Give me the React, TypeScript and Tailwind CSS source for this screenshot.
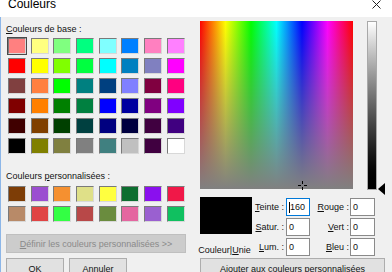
import React from "react";

const basic = [
  "#FF8080", "#FFFF80", "#80FF80", "#00FF80", "#80FFFF", "#0080FF", "#FF80C0", "#FF80FF",
  "#FF0000", "#FFFF00", "#80FF00", "#00FF40", "#00FFFF", "#0080C0", "#8080C0", "#FF00FF",
  "#804040", "#FF8040", "#00FF00", "#008080", "#004080", "#8080FF", "#800040", "#FF0080",
  "#800000", "#FF8000", "#008000", "#008040", "#0000FF", "#0000A0", "#800080", "#8000FF",
  "#400000", "#804000", "#004000", "#004040", "#000080", "#000040", "#400040", "#400080",
  "#000000", "#808000", "#808040", "#808080", "#408080", "#C0C0C0", "#400040", "#FFFFFF",
];

const custom = [
  "#7d3d06", "#9b4ed0", "#f59030", "#dfe088", "#ffff40", "#0d6e30", "#8a10ee", "#f01848",
  "#b88a68", "#e04444", "#33ff44", "#b84848", "#6a8c3e", "#e466a0", "#9a60d0", "#10c060",
];

function Swatch({ color, selected }: { color: string; selected?: boolean }) {
  return (
    <div className={`w-[20px] h-[18px] p-[1px] ${selected ? "bg-[#4a4a4a]" : ""}`}>
      <div
        className="w-full h-full border border-t-[#7a7a7a] border-l-[#7a7a7a] border-r-[#d8d8d8] border-b-[#d8d8d8]"
        style={{ backgroundColor: color }}
      />
    </div>
  );
}

function Grid({ colors, selectFirst }: { colors: string[]; selectFirst?: boolean }) {
  return (
    <div className="grid grid-cols-[repeat(8,20px)] gap-x-[2.7px] gap-y-[2px] ml-[1px]">
      {colors.map((c, i) => (
        <Swatch key={i} color={c} selected={selectFirst && i === 0} />
      ))}
    </div>
  );
}

function Field({ value, focused }: { value: string; focused?: boolean }) {
  return (
    <div
      className={`h-[18px] bg-white border flex items-center pl-[2px] ${
        focused ? "border-[#0078d7]" : "border-[#8a8a8a]"
      }`}
    >
      {focused && <span className="w-[1px] h-[11px] bg-black mr-[0px]" />}
      <span>{value}</span>
    </div>
  );
}

export default function App() {
  return (
    <div className="w-[392px] h-[272px] overflow-hidden bg-[#f0f0f0] flex flex-col font-['Liberation_Sans',Arial,sans-serif] text-[9px] leading-[12px] text-[#111]">
      {/* title bar */}
      <div className="h-[17px] shrink-0 bg-white flex items-start justify-between pl-[8px] pr-[11px]">
        <span className="text-[12px] leading-[14px] -mt-[3px] text-black">Couleurs</span>
        <svg width="9" height="9" viewBox="0 0 9 9" className="mt-[0px]">
          <path d="M0.5 0.5 L8.5 8.5 M8.5 0.5 L0.5 8.5" stroke="#222" strokeWidth="1" />
        </svg>
      </div>

      <div className="flex flex-1 border-l border-[#8cb6e8]">
        {/* left column */}
        <div className="w-[199px] shrink-0 pl-[5px] flex flex-col">
          <div className="mt-[6px]">
            <span className="underline">C</span>ouleurs de base :
          </div>
          <div className="mt-[2px]">
            <Grid colors={basic} selectFirst />
          </div>
          <div className="mt-[15px]">
            Couleurs <span className="underline">p</span>ersonnalisées :
          </div>
          <div className="mt-[3px]">
            <Grid colors={custom} />
          </div>
          <div className="mt-[11px] w-[180px] h-[19px] bg-[#cccccc] border border-[#bfbfbf] flex items-center justify-center text-[#8a8a8a]">
            <span>
              <span className="underline">D</span>éfinir les couleurs personnalisées &gt;&gt;
            </span>
          </div>
          <div className="mt-[5px] flex gap-[5px]">
            <div className="w-[58px] h-[21px] bg-[#e1e1e1] border border-[#adadad] flex items-center justify-center">
              OK
            </div>
            <div className="w-[58px] h-[21px] bg-[#e1e1e1] border border-[#adadad] flex items-center justify-center">
              Annuler
            </div>
          </div>
        </div>

        {/* right column */}
        <div className="flex flex-col">
          <div className="mt-[4px] flex items-start">
            <div className="relative w-[153px] h-[168px] bg-[linear-gradient(to_bottom,rgba(128,128,128,0),#808080),linear-gradient(to_right,#ff0000,#ffff00,#00ff00,#00ffff,#0000ff,#ff00ff,#ff0000)]">
              <svg
                width="9"
                height="9"
                viewBox="0 0 9 9"
                className="absolute left-[98px] top-[160px]"
              >
                <path d="M4.5 0 V3 M4.5 6 V9 M0 4.5 H3 M6 4.5 H9" stroke="#000" strokeWidth="1" />
              </svg>
            </div>
            <div className="relative ml-[14px] w-[10px] h-[169px] border border-[#a8a8a8] bg-gradient-to-b from-white to-black">
              <svg
                width="7"
                height="12"
                viewBox="0 0 7 12"
                className="absolute left-[10px] top-[161px]"
              >
                <path d="M0 6 L7 0 L7 12 Z" fill="#000" />
              </svg>
            </div>
          </div>

          <div className="mt-[7px] flex">
            <div className="w-[52px] flex flex-col items-center">
              <div className="w-[52px] h-[37px] bg-black" />
              <div className="mt-[10px] -ml-[3px] whitespace-nowrap">
                Couleur|<span className="underline">U</span>nie
              </div>
            </div>
            <div className="mt-[1px] grid grid-cols-[34px_24px_40px_25px] gap-y-[2px] gap-x-[0px] auto-rows-[18px]">
              <div className="flex items-center justify-end pr-[2px]">
                <span>
                  <span className="underline">T</span>einte :
                </span>
              </div>
              <Field value="160" focused />
              <div className="flex items-center justify-end pr-[1px]">
                <span>
                  <span className="underline">R</span>ouge :
                </span>
              </div>
              <Field value="0" />

              <div className="flex items-center justify-end pr-[2px]">
                <span>
                  <span className="underline">S</span>atur. :
                </span>
              </div>
              <Field value="0" />
              <div className="flex items-center justify-end pr-[1px]">
                <span>
                  <span className="underline">V</span>ert :
                </span>
              </div>
              <Field value="0" />

              <div className="flex items-center justify-end pr-[2px]">
                <span>
                  <span className="underline">L</span>um. :
                </span>
              </div>
              <Field value="0" />
              <div className="flex items-center justify-end pr-[1px]">
                <span>
                  <span className="underline">B</span>leu :
                </span>
              </div>
              <Field value="0" />
            </div>
          </div>

          <div className="mt-[2px] w-[185px] h-[21px] bg-[#e1e1e1] border border-[#adadad] flex items-center justify-center">
            <span>
              Ajouter au<span className="underline">x</span> couleurs personnalisées
            </span>
          </div>
        </div>
      </div>
    </div>
  );
}
